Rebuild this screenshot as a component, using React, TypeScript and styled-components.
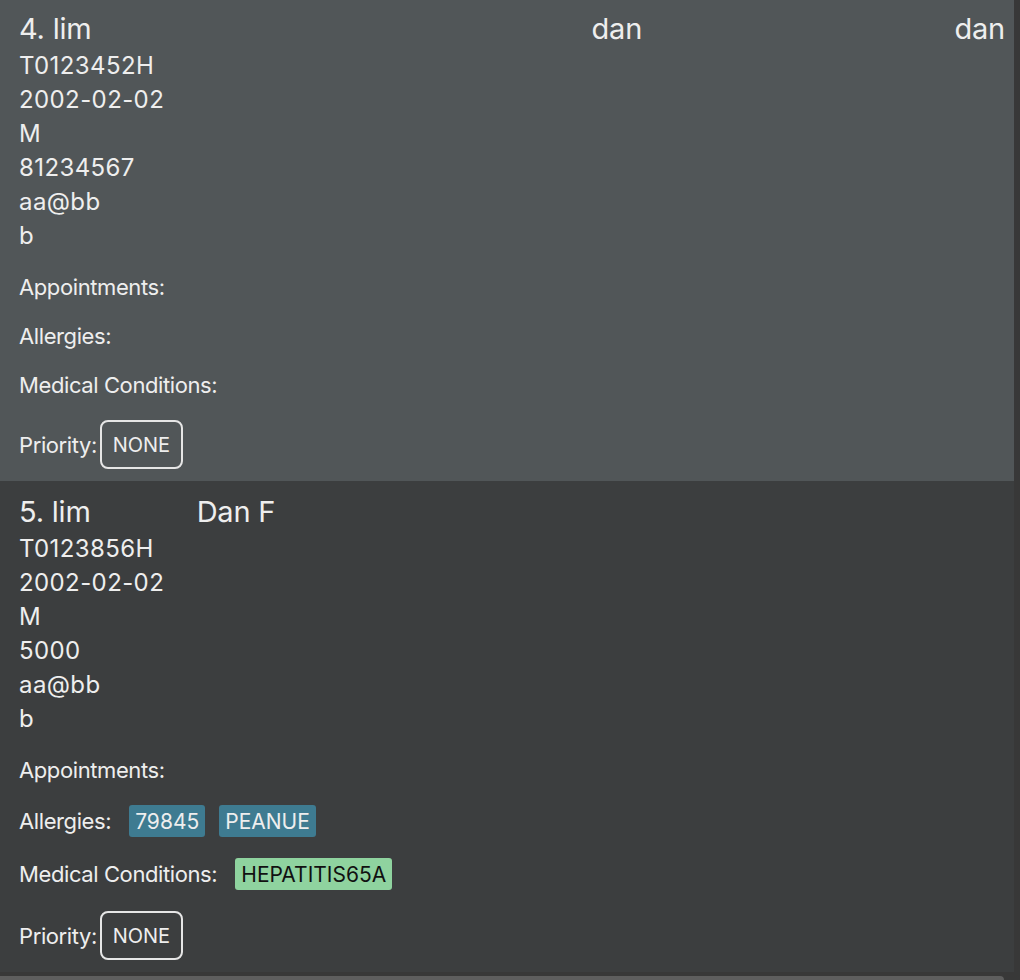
import React from "react";
import styled, { createGlobalStyle } from "styled-components";

const Global = createGlobalStyle`
  html, body { margin: 0; padding: 0; background: #383838; }
  body { font-family: Inter, "Open Sans", "Liberation Sans", sans-serif; color: #eeeeee; overflow: hidden; }
  * { box-sizing: border-box; }
`;

const Frame = styled.div`
  width: 1020px;
  height: 980px;
  display: flex;
  flex-direction: column;
  overflow: hidden;
  background: #383838;
`;

const Viewport = styled.div`
  height: 976px;
  display: flex;
  overflow: hidden;
`;

const List = styled.div`
  width: 1014px;
  display: flex;
  flex-direction: column;
  margin-top: -2px;
`;

const Track = styled.div`
  width: 6px;
  background: #383838;
`;

const HScroll = styled.div`
  height: 4px;
  width: 1004px;
  background: #5e5e5e;
  border-top-right-radius: 4px;
`;

const Card = styled.div<{ $bg: string }>`
  background: ${(p) => p.$bg};
  padding: 14px 8px 12px 19px;
  display: flex;
  flex-direction: column;
`;

const Header = styled.div`
  display: flex;
  align-items: center;
  height: 34px;
  margin-bottom: 3px;
  font-size: 29px;
  line-height: 34px;
  color: #eeeeee;
  white-space: nowrap;
`;

const Name = styled.span`
  letter-spacing: -0.2px;
`;

const Doctor = styled.span<{ $ml: number }>`
  margin-left: ${(p) => p.$ml}px;
  letter-spacing: -0.2px;
`;

const RightLabel = styled.span`
  margin-left: auto;
  margin-right: 1px;
  letter-spacing: -0.2px;
`;

const Detail = styled.div`
  font-size: 24px;
  line-height: 34px;
  height: 34px;
  letter-spacing: 0.4px;
  color: #eeeeee;
`;

const Sections = styled.div`
  display: flex;
  flex-direction: column;
  gap: 21px;
  margin-top: 20px;
`;

const Row = styled.div<{ $h: number }>`
  display: flex;
  align-items: center;
  min-height: ${(p) => p.$h}px;
  font-size: 22px;
  color: #eeeeee;
  white-space: nowrap;
`;

const Label = styled.span<{ $gap: number }>`
  margin-right: ${(p) => p.$gap}px;
  letter-spacing: -0.4px;
`;

const Tags = styled.div`
  display: flex;
  gap: 14px;
`;

const Tag = styled.span<{ $kind: "allergy" | "condition" }>`
  display: inline-flex;
  align-items: center;
  height: 32px;
  padding: 0 6px;
  border-radius: 3px;
  font-size: 21px;
  letter-spacing: 0px;
  background: ${(p) => (p.$kind === "allergy" ? "#3e7b91" : "#8fd39f")};
  color: ${(p) => (p.$kind === "allergy" ? "#eeeeee" : "#111111")};
`;

const PriorityBox = styled.span`
  display: inline-flex;
  align-items: center;
  justify-content: center;
  height: 49px;
  width: 83px;
  border: 2px solid #e6e6e6;
  border-radius: 8px;
  font-size: 20px;
  color: #eeeeee;
`;

type Patient = {
  name: string;
  doctor: string;
  doctorOffset: number;
  right?: string;
  details: string[];
  allergies: string[];
  conditions: string[];
  bg: string;
};

const patients: Patient[] = [
  {
    name: "4. lim",
    doctor: "dan",
    doctorOffset: 500,
    right: "dan",
    details: ["T0123452H", "2002-02-02", "M", "81234567", "aa@bb", "b"],
    allergies: [],
    conditions: [],
    bg: "#515658",
  },
  {
    name: "5. lim",
    doctor: "Dan F",
    doctorOffset: 106,
    details: ["T0123856H", "2002-02-02", "M", "5000", "aa@bb", "b"],
    allergies: ["79845", "PEANUE"],
    conditions: ["HEPATITIS65A"],
    bg: "#3c3e3f",
  },
];

function PatientCard({ p }: { p: Patient }) {
  return (
    <Card $bg={p.bg}>
      <Header>
        <Name>{p.name}</Name>
        <Doctor $ml={p.doctorOffset}>{p.doctor}</Doctor>
        {p.right && <RightLabel>{p.right}</RightLabel>}
      </Header>
      {p.details.map((d, i) => (
        <Detail key={i}>{d}</Detail>
      ))}
      <Sections>
        <Row $h={28}>
          <Label $gap={0}>Appointments:</Label>
        </Row>
        <Row $h={p.allergies.length ? 32 : 28}>
          <Label $gap={18}>Allergies:</Label>
          <Tags>
            {p.allergies.map((a) => (
              <Tag key={a} $kind="allergy">{a}</Tag>
            ))}
          </Tags>
        </Row>
        <Row $h={p.conditions.length ? 32 : 28}>
          <Label $gap={18}>Medical Conditions:</Label>
          <Tags>
            {p.conditions.map((c) => (
              <Tag key={c} $kind="condition">{c}</Tag>
            ))}
          </Tags>
        </Row>
        <Row $h={49}>
          <Label $gap={3}>Priority:</Label>
          <PriorityBox>NONE</PriorityBox>
        </Row>
      </Sections>
    </Card>
  );
}

export default function App() {
  return (
    <>
      <Global />
      <Frame>
        <Viewport>
          <List>
            {patients.map((p) => (
              <PatientCard key={p.name} p={p} />
            ))}
          </List>
          <Track />
        </Viewport>
        <HScroll />
      </Frame>
    </>
  );
}
